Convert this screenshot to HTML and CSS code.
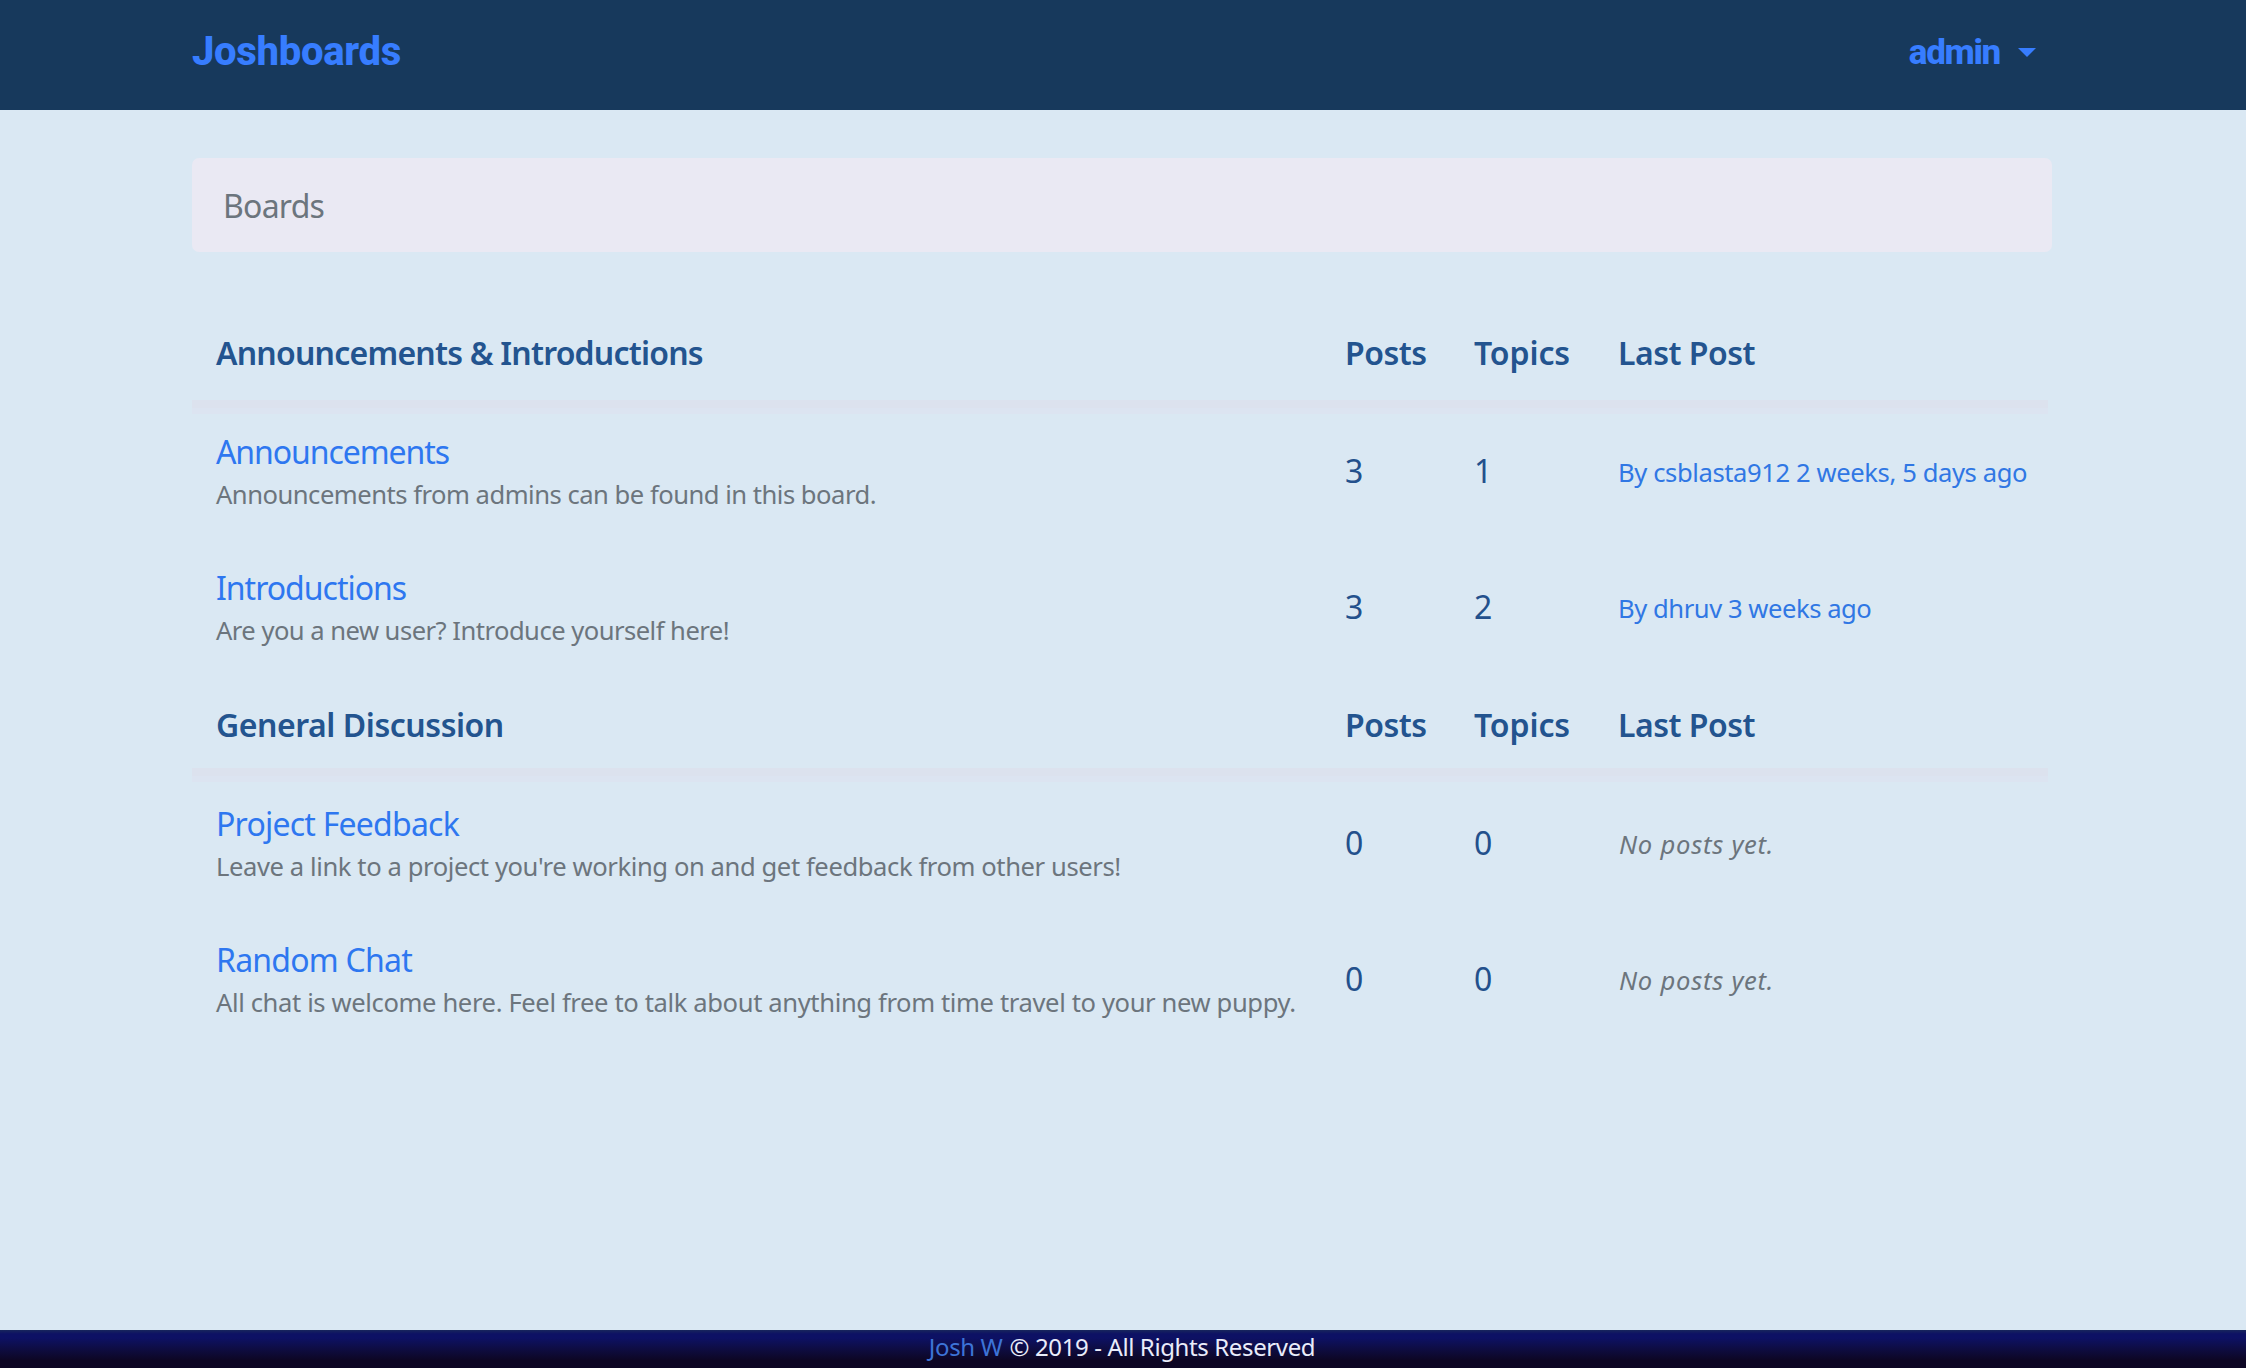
FILE: index.html
```
<!DOCTYPE html>
<html lang="en">
<head>
<meta charset="utf-8">
<title>Joshboards</title>
<link rel="stylesheet" href="styles.css">
</head>
<body>
<header class="navbar">
  <div class="container navbar-inner">
    <a class="brand">Joshboards</a>
    <a class="user"><span class="user-name">admin</span><svg class="caret" viewBox="0 0 18 9"><path d="M0 0h18L9 9z"/></svg></a>
  </div>
</header>
<main class="container">
  <nav class="breadcrumb"><span>Boards</span></nav>

  <section class="category">
    <div class="row head">
      <h2 class="heading h-announcements">Announcements &amp; Introductions</h2>
      <span class="heading">Posts</span><span class="heading h-topics">Topics</span><span class="heading">Last Post</span>
    </div>
    <div class="row board">
      <div><a class="board-link t-wide">Announcements</a><p class="desc">Announcements from admins can be found in this board.</p></div>
      <span class="count">3</span><span class="count">1</span>
      <a class="last">By csblasta912 2 weeks, 5 days ago</a>
    </div>
    <div class="row board">
      <div><a class="board-link t-intro">Introductions</a><p class="desc d-intro">Are you a new user? Introduce yourself here!</p></div>
      <span class="count">3</span><span class="count">2</span>
      <a class="last last-short">By dhruv 3 weeks ago</a>
    </div>
  </section>

  <section class="category general">
    <div class="row head">
      <h2 class="heading h-general">General Discussion</h2>
      <span class="heading">Posts</span><span class="heading h-topics">Topics</span><span class="heading">Last Post</span>
    </div>
    <div class="row board">
      <div><a class="board-link">Project Feedback</a><p class="desc d-feedback">Leave a link to a project you're working on and get feedback from other users!</p></div>
      <span class="count">0</span><span class="count">0</span>
      <em class="empty">No posts yet.</em>
    </div>
    <div class="row board">
      <div><a class="board-link">Random Chat</a><p class="desc d-chat">All chat is welcome here. Feel free to talk about anything from time travel to your new puppy.</p></div>
      <span class="count">0</span><span class="count">0</span>
      <em class="empty">No posts yet.</em>
    </div>
  </section>
</main>
<footer class="footer"><a class="author">Josh W</a><span>© 2019 - All Rights Reserved</span></footer>
</body>
</html>
```
FILE: styles.css
```
* { box-sizing: border-box; }

body {
  margin: 0;
  height: 1368px;
  display: flex;
  flex-direction: column;
  background: #dae8f3;
  color: #23548f;
  font: 32px/48px "Noto Sans", sans-serif;
  white-space: nowrap;
  overflow: hidden;
}

.container { width: 1860px; margin: 0 auto 0 192px; }

.navbar { height: 110px; flex: none; background: #17395c; }
.navbar-inner { display: flex; justify-content: space-between; align-items: flex-start; padding: 28px 16px 0 0; }
.brand { font: 800 40px/48px Roboto, sans-serif; letter-spacing: -0.3px; color: #377dff; }
.user { display: flex; align-items: center; gap: 18px; color: #377dff; }
.user-name { font: 800 35px/48px Roboto, sans-serif; letter-spacing: -1.3px; padding-top: 1px; }
.caret { width: 18px; height: 9px; fill: currentColor; }

.breadcrumb {
  height: 94px;
  margin-top: 48px;
  padding: 24px 32px 0 31px;
  border-radius: 7px;
  background: #eae9f3;
  color: #6c757d;
  letter-spacing: -0.75px;
}

.category { margin-top: 53px; }
.general { margin-top: 0; }

.row { display: grid; grid-template-columns: 1129px 129px 144px 1fr; padding-left: 24px; }
.head {
  height: 103px;
  padding-top: 24px;
  margin-right: 4px;
  border-bottom: 8px solid #dce2ee;
  box-shadow: 0 6px #dce4f1;
}
.general .head { height: 99px; }
.heading { margin: 0; font-size: 32px; font-weight: 600; letter-spacing: -0.5px; }
.h-announcements { letter-spacing: -0.78px; }
.h-topics { letter-spacing: -0.1px; }
.h-general { letter-spacing: -0.45px; }

.board { height: 136px; padding-top: 23px; }
.head + .board { height: 133px; padding-top: 20px; }
.general .head + .board { height: 137px; padding-top: 24px; }

.board-link { display: block; color: #2e77f0; letter-spacing: -0.77px; }
.t-wide { letter-spacing: -1.08px; }
.t-intro { letter-spacing: -1px; }
.desc { margin: 0; font-size: 25.6px; line-height: 38px; letter-spacing: -0.5px; color: #6c757d; }
.d-intro { letter-spacing: -0.53px; }
.d-feedback { letter-spacing: -0.41px; }
.d-chat { letter-spacing: -0.38px; }
.count { padding-top: 19px; color: #23508c; letter-spacing: -0.6px; }
.last, .empty { padding-top: 21px; font-size: 25.6px; }
.last { color: #3077e4; letter-spacing: -0.4px; }
.last-short { letter-spacing: -0.45px; }
.empty { padding-left: 1px; color: #6c757d; letter-spacing: 0.75px; }

.footer {
  flex: none;
  display: flex;
  justify-content: center;
  gap: 7px;
  height: 38px;
  margin-top: auto;
  padding-right: 2px;
  background: linear-gradient(#18265c 0, #0d1164 4px, #0d1164 8px, #0e0d45 18px, #0d0624 30px);
  color: #e9ecfa;
  font-size: 24px;
  line-height: 33px;
  letter-spacing: -0.38px;
}
.author { color: #3d74d8; }
```
